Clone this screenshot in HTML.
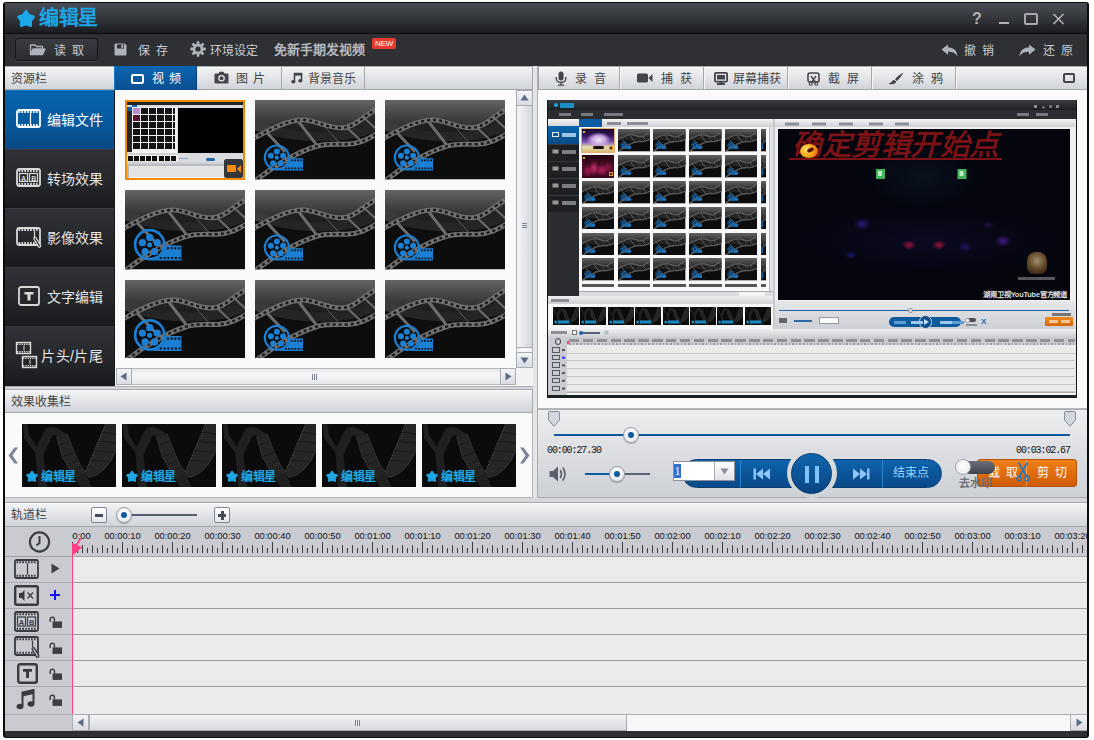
<!DOCTYPE html>
<html lang="zh-CN">
<head>
<meta charset="utf-8">
<title>编辑星</title>
<style>
*{box-sizing:border-box;margin:0;padding:0}
html,body{width:1094px;height:740px;overflow:hidden;background:#fff}
body{font-family:"Liberation Sans",sans-serif;font-size:12px;color:#333;position:relative}
.abs{position:absolute}
#win{position:absolute;left:3px;top:2px;width:1086px;height:735.500px;background:#2d2f33;border-radius:3px;overflow:hidden;border:2px solid #0b0b0c;border-top-width:1px;border-bottom-width:1px}
/* everything inside #app is positioned in page coordinates */
#app{position:absolute;left:0;top:0;width:1094px;height:740px}
#title{left:5px;top:3px;width:1082px;height:30px;background:linear-gradient(#494c54 0,#43464d 15%,#33363b 50%,#222428 85%,#1b1c20 100%)}
#titleline{left:5px;top:33px;width:1082px;height:1px;background:#0a0a0b}
#toolbar{left:5px;top:34px;width:1082px;height:32px;background:#2e3034}
.tbtxt{color:#c9ccd1;font-size:12px;line-height:14px;white-space:nowrap}
.hdr{background:linear-gradient(#f3f4f5 0,#e4e6e9 45%,#d0d3d8 100%);border:1px solid #a4a7ac;box-shadow:inset 0 1px 0 #fafafa}
.hdrtxt{font-size:12px;color:#444;line-height:14px;white-space:nowrap}
.tab{position:absolute;top:0;height:100%;border-right:1px solid #a5a8ad}
.side{left:5px;width:109px;height:59px;background:linear-gradient(#303237 0,#26282c 50%,#191a1d 100%);border-top:1px solid #3a3c41;color:#e6e6e6;font-size:14px}
.side.sel{background:linear-gradient(#0764ad 0,#075a9f 50%,#0b4a86 100%);border-top:1px solid #1674bd;color:#fff}
.side span{position:absolute;left:42px;top:20px;line-height:18px;white-space:nowrap}
.thumb{position:absolute;width:120px;height:80px}
.eff{position:absolute;top:424px;width:94px;height:63px}
.sb{background:linear-gradient(#fbfbfb,#ececec)}
.sbbtn{background:linear-gradient(#f3f4f6,#d9dce1);border:1px solid #a9acb1}
.trk{left:72px;width:1015px;height:1px;background:#9d9d9d}
.trkL{left:5px;width:67px;height:1px;background:#a9abb0}

.mt{background:linear-gradient(#5a5a5a 0,#2c2c2c 38%,#0e0e0e 52%,#0c0c0c 100%)}
.mt:before{content:"";position:absolute;left:3px;top:11px;width:10px;height:8px;background:#1b73bd;border-radius:4px 2px 1px 3px}
.mt:after{content:"";position:absolute;left:8px;top:6px;width:24px;height:3px;background:#5d5d5d;transform:rotate(-14deg);opacity:.8}
.rtab{position:absolute;top:67px;height:22px;border-right:1px solid #a5a8ad;box-shadow:1px 0 0 #f4f5f6}
.digi{font-family:"Liberation Mono",monospace;font-size:10px;line-height:12px;color:#111;letter-spacing:-1.1px;white-space:nowrap}
#t1i i{position:absolute;display:block}
</style>
</head>
<body>

<svg width="0" height="0" style="position:absolute">
<defs>
<linearGradient id="tg" x1="0" y1="0" x2="0" y2="1"><stop offset="0" stop-color="#646464"/><stop offset="0.5" stop-color="#3a3a3a"/><stop offset="1" stop-color="#1c1c1c"/></linearGradient>
<linearGradient id="tg2" x1="0" y1="0" x2="0" y2="1"><stop offset="0" stop-color="#fff" stop-opacity="0"/><stop offset="1" stop-color="#fff" stop-opacity="0.140"/></linearGradient>
<g id="reel">
<circle cx="21.900" cy="57.800" r="12" fill="none" stroke="#1b7fd4" stroke-width="2.200"/>
<g fill="#1b7fd4"><circle cx="21.900" cy="51.800" r="3"/><circle cx="15.900" cy="56.200" r="3"/><circle cx="28.100" cy="56.200" r="3"/><circle cx="18.100" cy="63.600" r="3"/><circle cx="25.800" cy="63.600" r="3"/><circle cx="21.900" cy="58" r="2.100"/>
<path d="M21.900 71 H48 V58.600 H34.900 A13.100 13.100 0 0 1 21.900 70.900 Z"/></g>
<path d="M36 60.800 H47.200" stroke="#0d0d0d" stroke-width="1.700" stroke-dasharray="1.700 1.400"/>
<path d="M30.200 68.900 H47.200" stroke="#0d0d0d" stroke-width="1.700" stroke-dasharray="1.700 1.400"/>
</g>
<g id="filmbg">
<rect width="120" height="80" fill="#0d0d0d"/>
<path d="M0 0 H120 V31 C95 45 35 44 0 30 Z" fill="url(#tg)"/>
<path d="M0 20 C35 36 95 37 120 20 V31 C95 45 35 44 0 30 Z" fill="url(#tg2)"/><path d="M0 30 C35 44 95 45 120 31" stroke="#3c3c3c" stroke-width="1" fill="none"/>
<!-- film body -->
<path d="M-2 40 C15 31 30 21 47 20 C60 19.5 70 28 86 28 C100 28 108 16 122 9 L122 36 C112 41 104 45 92 45 C80 45 72 43 62 47 C40 54 15 70 -2 84 Z" fill="#101010" opacity="0.5"/>
<!-- dividers -->
<path d="M12 33 L30 52 M43 21 L63 47" stroke="#6c6c6c" stroke-width="3"/>
<path d="M69 26 L86 45" stroke="#5a5a5a" stroke-width="1"/>
<path d="M91 27 L107 42 M108 17 L121 29" stroke="#6c6c6c" stroke-width="2"/>
<!-- rails -->
<path id="r1" d="M-2 39 C15 30 30 21 47 20 C60 19.5 70 28 86 28 C100 28 108 16 122 9" stroke="#707070" stroke-width="5" fill="none"/>
<path d="M-2 39 C15 30 30 21 47 20 C60 19.5 70 28 86 28 C100 28 108 16 122 9" stroke="#1b1b1b" stroke-width="2.4" stroke-dasharray="3 3" fill="none"/>
<path d="M-2 83 C15 69 40 53 62 46.500 C72 43 80 45 92 44.500 C104 44 112 40 122 34" stroke="#707070" stroke-width="5" fill="none"/>
<path d="M-2 83 C15 69 40 53 62 46.500 C72 43 80 45 92 44.500 C104 44 112 40 122 34" stroke="#1b1b1b" stroke-width="2.4" stroke-dasharray="3 3" fill="none"/>
</g>
<symbol id="film" viewBox="0 0 120 80"><use href="#filmbg"/><use href="#reel"/></symbol>
<symbol id="film2" viewBox="0 0 120 80"><use href="#filmbg"/><use href="#reel" transform="translate(8.800 71) scale(1.214) translate(-8.800 -71)"/></symbol>
<symbol id="effs" viewBox="0 0 94 63">
<rect width="94" height="63" fill="#0b0b0b"/>
<path d="M1 0 H5.500 L7 11 L14.500 23 L22.500 7 C25 2.500 31 1.500 36 4.500 C40 7 43 9.500 45.300 10 L52.300 28 L59.400 43 L63.500 47.500 L83.500 0 H94 V27 C91 34 89 37 87.500 39 C84 44 80 48 75.500 50.500 C72 52.500 68 53.500 65 53 L70 63 H58 L53 53.500 C51 52 50 50.500 49.300 48.500 L40.300 33 L34.700 13 C33.500 10.500 31 10.500 29.800 13 L21.500 31 L25 63 H16 L13.500 29 L2 14 Z" fill="#202020"/>
<path d="M83.500 0 H94 V27 C91 34 89 37 87.500 39 C84 44 80 48 75.500 50.500 C72 52.500 68 53.500 65 53 L63.500 47.500 Z" fill="#262626"/>
<path d="M34.700 13 L45.300 10 L52.300 28 L59.400 43 L63.500 47.500 L58 52 L49.300 48.500 L40.300 33 Z" fill="#252525"/>
<path d="M37 21 L48 17.500 M40.300 33 L52.300 28 M45 41 L56 36 M49.300 48.500 L59.400 43 M80.500 8 L94 10 M76.500 17 L94 19 M72.500 26.500 L93 28 M68.500 36 L88 38" stroke="#171717" stroke-width="0.900" fill="none"/>
<path d="M34.700 13 L40.300 33 L49.300 48.500 L56 52.500" stroke="#555" stroke-width="0.800" stroke-dasharray="1.200 1.200" fill="none"/>
<path d="M45.300 10 L52.300 28 L59.400 43 L63.500 47.500" stroke="#4a4a4a" stroke-width="0.800" stroke-dasharray="1.200 1.200" fill="none"/>
<path d="M83.500 0 L63.500 47.500" stroke="#5a5a5a" stroke-width="0.800" stroke-dasharray="1.200 1.200" fill="none"/>
<path d="M93.500 27 C90 35 84 45 75.500 50.500 C72 52.500 68 53.500 65 53" stroke="#484848" stroke-width="0.800" stroke-dasharray="1.200 1.200" fill="none"/>
<path d="M10.0 47.6 L11.8 50.4 L14.9 51.2 L12.9 53.7 L13.1 57.0 L10.0 55.8 L6.900 57.0 L7.100 53.700 L5.100 51.200 L8.200 50.400 Z" fill="#1fa6e3" stroke="#1fa6e3" stroke-width="1.800" stroke-linejoin="round"/>
</symbol>
</defs>
</svg>
<div id="win"></div>
<div id="app">
<!-- TITLE BAR -->
<div id="title" class="abs"></div>
<div id="titleline" class="abs"></div>
<div id="toolbar" class="abs"></div>

<svg class="abs" style="left:16px;top:9px" width="20" height="20" viewBox="0 0 20 20"><path d="M10.0 2.2 L12.9 6.2 L17.6 7.7 L14.7 11.7 L14.7 16.7 L10.0 15.1 L5.3 16.7 L5.3 11.7 L2.4 7.7 L7.1 6.2 Z" fill="#1ca7e6" stroke="#1ca7e6" stroke-width="2.600" stroke-linejoin="round"/></svg>
<div class="abs" style="left:39px;top:6px;font-size:20px;line-height:24px;font-weight:bold;color:#1ca7e6;white-space:nowrap;letter-spacing:-0.5px">编辑星</div>
<div class="abs" style="left:971px;top:10px;width:12px;font-size:16px;line-height:18px;color:#b4b4b4;text-align:center;font-weight:bold">?</div>
<div class="abs" style="left:999px;top:22px;width:10px;height:2px;background:#b4b4b4"></div>
<div class="abs" style="left:1024px;top:13px;width:14px;height:12px;border:2px solid #a9a9a9;border-radius:2px"></div>
<svg class="abs" style="left:1052px;top:13px" width="13" height="12" viewBox="0 0 13 12"><path d="M1.5 1 L11.5 11 M11.5 1 L1.5 11" stroke="#b4b4b4" stroke-width="1.6" fill="none"/></svg>


<div class="abs" style="left:15px;top:38px;width:83px;height:23px;border:1px solid #141517;border-radius:3px;background:linear-gradient(#3a3c41,#2a2c30);box-shadow:0 1px 0 #45474c"></div>
<svg class="abs" style="left:29px;top:43px" width="17" height="13" viewBox="0 0 17 13"><path d="M1.500 11.500 V2 H6 L7.500 3.500 H13.500 V5.500" fill="none" stroke="#aeb2ba" stroke-width="1.400" stroke-linejoin="round"/><path d="M1.500 11.500 L4 6 H16 L13.500 11.500 Z" fill="#aeb2ba" stroke="#aeb2ba" stroke-width="1.400" stroke-linejoin="round"/></svg>
<div class="abs tbtxt" style="left:54px;top:44px;letter-spacing:6px">读取</div>
<svg class="abs" style="left:114px;top:43px" width="13" height="13" viewBox="0 0 13 13"><path d="M0.5 1.5 Q0.5 0.5 1.5 0.5 H10.5 L12.5 2.5 V11.5 Q12.5 12.5 11.5 12.5 H1.5 Q0.5 12.5 0.5 11.5 Z" fill="#aeb2ba"/><rect x="3" y="1.5" width="7" height="4" fill="#2e3034"/><rect x="7.3" y="2" width="1.8" height="3" fill="#aeb2ba"/></svg>
<div class="abs tbtxt" style="left:138px;top:44px;letter-spacing:6px">保存</div>
<svg class="abs" style="left:190px;top:41px" width="16" height="16" viewBox="0 0 16 16"><g fill="#aeb2ba"><circle cx="8" cy="8" r="5.2"/><g id="gt"><rect x="6.6" y="0.3" width="2.8" height="15.4" rx="0.6"/></g><use href="#gt" transform="rotate(45 8 8)"/><use href="#gt" transform="rotate(90 8 8)"/><use href="#gt" transform="rotate(135 8 8)"/></g><circle cx="8" cy="8" r="2.6" fill="#2e3034"/></svg>
<div class="abs tbtxt" style="left:210px;top:44px">环境设定</div>
<div class="abs tbtxt" style="left:274px;top:43px;font-size:13px;font-weight:bold;color:#b6b9be">免新手期发视频</div>
<div class="abs" style="left:372px;top:38px;width:24px;height:11px;background:#e8392e;border-radius:2px;color:#fff;font-size:8px;line-height:11px;text-align:center;letter-spacing:-0.2px">NEW</div>
<svg class="abs" style="left:941px;top:44px" width="17" height="13" viewBox="0 0 17 13"><path d="M0.5 5.5 L7 0.5 V3.5 C12 3.5 16 6 16.5 12.5 C14.5 9 11.5 7.8 7 7.8 V10.8 Z" fill="#aeb2ba"/></svg>
<div class="abs tbtxt" style="left:964px;top:44px;letter-spacing:6px">撤销</div>
<svg class="abs" style="left:1019px;top:44px" width="17" height="13" viewBox="0 0 17 13"><path d="M16.5 5.5 L10 0.5 V3.5 C5 3.5 1 6 0.5 12.5 C2.5 9 5.5 7.8 10 7.8 V10.8 Z" fill="#aeb2ba"/></svg>
<div class="abs tbtxt" style="left:1043px;top:44px;letter-spacing:6px">还原</div>


<!-- resource header -->
<div class="abs hdr" style="left:5px;top:66px;width:109px;height:24px;border-left:none;border-right:none"></div>
<div class="abs hdrtxt" style="left:11px;top:72px">资源栏</div>
<div class="abs hdr" style="left:114px;top:66px;width:419px;height:24px"></div>
<div class="abs" style="left:114px;top:66px;width:83px;height:24px;background:linear-gradient(#0a66b0,#0a4f92);border-right:1px solid #083e74;border-left:1px solid #1a7ac4"></div>
<div class="abs" style="left:197px;top:67px;width:85px;height:22px;border-right:1px solid #a5a8ad"></div>
<div class="abs" style="left:282px;top:67px;width:83px;height:22px;border-right:1px solid #a5a8ad"></div>
<div class="abs" style="left:131px;top:74px;width:13px;height:10px;border:2px solid #fff;border-radius:2px"></div>
<div class="abs hdrtxt" style="left:152px;top:72px;color:#fff;letter-spacing:5px">视频</div>
<svg class="abs" style="left:214px;top:71px" width="15" height="13" viewBox="0 0 15 13"><path d="M1.500 2.500 H4.500 L5.500 0.800 H9.500 L10.500 2.500 H13.500 Q14.500 2.500 14.500 3.500 V11.500 Q14.500 12.500 13.500 12.500 H1.500 Q0.500 12.500 0.500 11.500 V3.500 Q0.500 2.500 1.500 2.500 Z" fill="#44464b"/><circle cx="7.500" cy="7.300" r="3.300" fill="#e4e6e9"/><circle cx="7.500" cy="7.300" r="2" fill="#44464b"/></svg>
<div class="abs hdrtxt" style="left:236px;top:72px;letter-spacing:5px">图片</div>
<svg class="abs" style="left:291px;top:72px" width="12" height="12" viewBox="0 0 12 12"><path d="M3.500 9.500 V1.500 H10.500 V8.500" stroke="#44464b" stroke-width="1.600" fill="none"/><rect x="3.500" y="1" width="7" height="2.600" fill="#44464b"/><ellipse cx="2.300" cy="9.800" rx="2.100" ry="1.700" fill="#44464b"/><ellipse cx="9.300" cy="8.800" rx="2.100" ry="1.700" fill="#44464b"/></svg>
<div class="abs hdrtxt" style="left:308px;top:72px">背景音乐</div>
<!-- sidebar -->
<div class="abs" style="left:5px;top:90px;width:109px;height:296px;background:#17181b"></div>
<div class="abs side sel" style="top:90px"><span style="left:42px">编辑文件</span></div>
<div class="abs side" style="top:149px"><span>转场效果</span></div>
<div class="abs side" style="top:208px"><span>影像效果</span></div>
<div class="abs side" style="top:267px"><span>文字编辑</span></div>
<div class="abs side" style="top:326px;height:60px"><span style="left:36px;letter-spacing:0.5px">片头/片尾</span></div>
<!-- sidebar icons -->
<svg class="abs" style="left:16px;top:109px" width="25" height="19" viewBox="0 0 25 19"><rect x="1" y="1" width="23" height="17" rx="2" fill="none" stroke="#fff" stroke-width="1.800"/><path d="M2.500 3 H22.500 M2.500 16 H22.500" stroke="#fff" stroke-width="2" stroke-dasharray="1.700 1.200"/><path d="M14.500 4 V15" stroke="#fff" stroke-width="1.200"/></svg>
<svg class="abs" style="left:16px;top:168px" width="25" height="19" viewBox="0 0 25 19"><rect x="1" y="1" width="23" height="17" rx="2" fill="none" stroke="#d9d9d9" stroke-width="1.800"/><path d="M2.500 3 H22.500 M2.500 16 H22.500" stroke="#d9d9d9" stroke-width="2" stroke-dasharray="1.700 1.200"/><rect x="3.500" y="5.500" width="8" height="8" fill="none" stroke="#d9d9d9" stroke-width="1.200"/><rect x="13.500" y="5.500" width="8" height="8" fill="none" stroke="#d9d9d9" stroke-width="1.200"/><text x="5" y="12.500" font-size="7" font-weight="bold" fill="#d9d9d9" font-family="Liberation Sans, sans-serif">A</text><text x="15.200" y="12.500" font-size="7" font-weight="bold" fill="#d9d9d9" font-family="Liberation Sans, sans-serif">B</text></svg>
<svg class="abs" style="left:16px;top:227px" width="27" height="22" viewBox="0 0 27 22"><rect x="1" y="1" width="23" height="17" rx="2" fill="none" stroke="#d9d9d9" stroke-width="1.800"/><path d="M2.500 3 H22.500 M2.500 16 H22.500" stroke="#d9d9d9" stroke-width="2" stroke-dasharray="1.700 1.200"/><path d="M18.500 4 V10" stroke="#d9d9d9" stroke-width="1.200"/><path d="M19 11.500 L23.500 19" stroke="#d9d9d9" stroke-width="3.600" stroke-linecap="round"/><path d="M19 11.500 L23.500 19" stroke="#26282c" stroke-width="1.200" stroke-linecap="round"/></svg>
<svg class="abs" style="left:18px;top:286px" width="22" height="20" viewBox="0 0 22 20"><rect x="1" y="1" width="20" height="18" rx="2" fill="none" stroke="#d9d9d9" stroke-width="1.800"/><path d="M6.500 6 H15.500 V8.500 H12.500 V14.500 H9.500 V8.500 H6.500 Z" fill="#d9d9d9"/></svg>
<svg class="abs" style="left:15px;top:341px" width="24" height="28" viewBox="0 0 24 28"><g fill="none" stroke="#d9d9d9"><rect x="1.500" y="1.500" width="14" height="11" stroke-width="1.400"/><path d="M2 3.200 H15 M2 10.800 H15" stroke-width="1.600" stroke-dasharray="1.300 1"/><path d="M9 4.500 V9.500" stroke-width="1"/><rect x="7.500" y="15.500" width="14" height="11" stroke-width="1.400"/><path d="M8 17.200 H21 M8 24.800 H21" stroke-width="1.600" stroke-dasharray="1.300 1"/><path d="M15 18.500 V23.500" stroke-width="1"/></g></svg>
<!-- thumbs area -->
<div class="abs" style="left:114px;top:90px;width:419px;height:296px;background:#fafafa;border-left:1px solid #15161a"></div>
<div class="abs" id="t1" style="left:125px;top:100px;width:120px;height:80px;background:#f58a07">
<div class="abs" style="left:2px;top:2px;width:116px;height:76px;background:#dedfe1;overflow:hidden">
<div class="abs" style="left:-2px;top:-2px;width:120px;height:80px" id="t1i">
<i style="left:2px;top:2px;width:116px;height:3.400px;background:#232428"></i>
<i style="left:2px;top:5.400px;width:116px;height:1.800px;background:#d8dadd"></i>
<i style="left:7px;top:5.400px;width:5px;height:1.800px;background:#1565b0"></i>
<i style="left:6.700px;top:7px;width:45.500px;height:46px;background:#f4f4f4"></i>
<i style="left:2px;top:7px;width:4.700px;height:44.500px;background:#25262a"></i>
<i style="left:2px;top:7px;width:4.700px;height:4.300px;background:#0b5fa8"></i>
<i style="left:7.9px;top:7.9px;width:7px;height:6.100px;background:#b98fd0"></i><i style="left:15.9px;top:7.9px;width:7px;height:6.100px;background:#141414"></i><i style="left:23.9px;top:7.9px;width:7px;height:6.100px;background:#141414"></i><i style="left:31.9px;top:7.9px;width:7px;height:6.100px;background:#141414"></i><i style="left:39.9px;top:7.9px;width:7px;height:6.100px;background:#141414"></i><i style="left:47.9px;top:7.9px;width:2.6px;height:6.100px;background:#141414"></i><i style="left:7.9px;top:14.9px;width:7px;height:6.100px;background:#5a1030"></i><i style="left:15.9px;top:14.9px;width:7px;height:6.100px;background:#141414"></i><i style="left:23.9px;top:14.9px;width:7px;height:6.100px;background:#141414"></i><i style="left:31.9px;top:14.9px;width:7px;height:6.100px;background:#141414"></i><i style="left:39.9px;top:14.9px;width:7px;height:6.100px;background:#141414"></i><i style="left:47.9px;top:14.9px;width:2.6px;height:6.100px;background:#141414"></i><i style="left:7.9px;top:22.0px;width:7px;height:6.100px;background:#141414"></i><i style="left:15.9px;top:22.0px;width:7px;height:6.100px;background:#141414"></i><i style="left:23.9px;top:22.0px;width:7px;height:6.100px;background:#141414"></i><i style="left:31.9px;top:22.0px;width:7px;height:6.100px;background:#141414"></i><i style="left:39.9px;top:22.0px;width:7px;height:6.100px;background:#141414"></i><i style="left:47.9px;top:22.0px;width:2.6px;height:6.100px;background:#141414"></i><i style="left:7.9px;top:29.0px;width:7px;height:6.100px;background:#141414"></i><i style="left:15.9px;top:29.0px;width:7px;height:6.100px;background:#141414"></i><i style="left:23.9px;top:29.0px;width:7px;height:6.100px;background:#141414"></i><i style="left:31.9px;top:29.0px;width:7px;height:6.100px;background:#141414"></i><i style="left:39.9px;top:29.0px;width:7px;height:6.100px;background:#141414"></i><i style="left:47.9px;top:29.0px;width:2.6px;height:6.100px;background:#141414"></i><i style="left:7.9px;top:36.1px;width:7px;height:6.100px;background:#141414"></i><i style="left:15.9px;top:36.1px;width:7px;height:6.100px;background:#141414"></i><i style="left:23.9px;top:36.1px;width:7px;height:6.100px;background:#141414"></i><i style="left:31.9px;top:36.1px;width:7px;height:6.100px;background:#141414"></i><i style="left:39.9px;top:36.1px;width:7px;height:6.100px;background:#141414"></i><i style="left:47.9px;top:36.1px;width:2.6px;height:6.100px;background:#141414"></i><i style="left:7.9px;top:43.1px;width:7px;height:6.100px;background:#141414"></i><i style="left:15.9px;top:43.1px;width:7px;height:6.100px;background:#141414"></i><i style="left:23.9px;top:43.1px;width:7px;height:6.100px;background:#141414"></i><i style="left:31.9px;top:43.1px;width:7px;height:6.100px;background:#141414"></i><i style="left:39.9px;top:43.1px;width:7px;height:6.100px;background:#141414"></i><i style="left:47.9px;top:43.1px;width:2.6px;height:6.100px;background:#141414"></i>
<i style="left:52.700px;top:7.700px;width:65.300px;height:45.300px;background:#000"></i>
<i style="left:52.500px;top:53px;width:65.500px;height:8.500px;background:#d9dbde"></i>
<i style="left:2px;top:53px;width:50.500px;height:2.200px;background:#d0d2d6"></i>
<i style="left:2px;top:55.200px;width:50.500px;height:6px;background:#f0f0f0"></i>
<i style="left:2.5px;top:56px;width:5px;height:4.500px;background:#0e0e0e"></i><i style="left:8.7px;top:56px;width:5px;height:4.500px;background:#0e0e0e"></i><i style="left:14.9px;top:56px;width:5px;height:4.500px;background:#0e0e0e"></i><i style="left:21.1px;top:56px;width:5px;height:4.500px;background:#0e0e0e"></i><i style="left:27.3px;top:56px;width:5px;height:4.500px;background:#0e0e0e"></i><i style="left:33.5px;top:56px;width:5px;height:4.500px;background:#0e0e0e"></i><i style="left:39.7px;top:56px;width:5px;height:4.500px;background:#0e0e0e"></i><i style="left:45.9px;top:56px;width:5px;height:4.500px;background:#0e0e0e"></i>
<i style="left:81px;top:57.500px;width:9px;height:3px;background:#1b66a8;border-radius:1.500px"></i>
<i style="left:54px;top:58.300px;width:9px;height:1.200px;background:#8fa3bd"></i>
<i style="left:2px;top:61.500px;width:116px;height:2px;background:#cfd1d5"></i>
<i style="left:2px;top:63.500px;width:116px;height:2.300px;background:#b9bbc1"></i>
<i style="left:2px;top:65.800px;width:2.300px;height:12.200px;background:#b9bbc1"></i>
<i style="left:4.300px;top:65.800px;width:113.700px;height:11px;background:#e4e4e4"></i>
<i style="left:4.300px;top:76.800px;width:113.700px;height:1.200px;background:#f2f2f2"></i>
<i style="left:99px;top:59px;width:19px;height:18.700px;background:#33353a;border-radius:2.500px"></i>
<i style="left:102px;top:65.300px;width:9px;height:7px;background:#f58a07;border-radius:0.800px"></i>
<i style="left:111.500px;top:64.800px;width:0;height:0;border-right:4.500px solid #f58a07;border-top:4px solid transparent;border-bottom:4px solid transparent"></i>
</div></div></div>

<svg class="thumb" style="left:255px;top:100px;height:79.500px" viewBox="0 0 120 80" preserveAspectRatio="none"><use href="#film"/></svg>
<svg class="thumb" style="left:385px;top:100px;height:79.500px" viewBox="0 0 120 80" preserveAspectRatio="none"><use href="#film"/></svg>
<svg class="thumb" style="left:125px;top:190px;height:79.500px" viewBox="0 0 120 80" preserveAspectRatio="none"><use href="#film2"/></svg>
<svg class="thumb" style="left:255px;top:190px;height:79.500px" viewBox="0 0 120 80" preserveAspectRatio="none"><use href="#film"/></svg>
<svg class="thumb" style="left:385px;top:190px;height:79.500px" viewBox="0 0 120 80" preserveAspectRatio="none"><use href="#film"/></svg>
<svg class="thumb" style="left:125px;top:280px;height:78px" viewBox="0 0 120 78" preserveAspectRatio="xMidYMin slice"><use href="#film2" width="120" height="80"/></svg>
<svg class="thumb" style="left:255px;top:280px;height:78px" viewBox="0 0 120 78" preserveAspectRatio="xMidYMin slice"><use href="#film" width="120" height="80"/></svg>
<svg class="thumb" style="left:385px;top:280px;height:78px" viewBox="0 0 120 78" preserveAspectRatio="xMidYMin slice"><use href="#film" width="120" height="80"/></svg>

<!-- v scrollbar -->
<div class="abs sb" style="left:516px;top:90px;width:17px;height:278px;background:linear-gradient(90deg,#e9eaec,#fbfbfb 40%,#eeeff1);border-left:1px solid #b5b7bb;border-right:1px solid #b5b7bb"></div>
<div class="abs" style="left:516px;top:105px;width:17px;height:243px;background:linear-gradient(90deg,#f5f6f7,#e4e6ea 50%,#d3d6dc);border:1px solid #a9acb1"></div><div class="abs sbbtn" style="left:516px;top:90px;width:17px;height:16px"></div>
<div class="abs sbbtn" style="left:516px;top:352px;width:17px;height:16px"></div>
<svg class="abs" style="left:520px;top:94px" width="9" height="7" viewBox="0 0 9 7"><path d="M4.500 0.500 L8.500 6.500 H0.500 Z" fill="#5d6a86"/></svg>
<svg class="abs" style="left:520px;top:357px" width="9" height="7" viewBox="0 0 9 7"><path d="M4.500 6.500 L8.500 0.500 H0.500 Z" fill="#5d6a86"/></svg>
<div class="abs" style="left:522px;top:223px;width:5px;height:1px;background:#7d8597;box-shadow:0 2px 0 #7d8597,0 4px 0 #7d8597"></div>
<!-- h scrollbar -->
<div class="abs" style="left:116px;top:368px;width:417px;height:17px;background:linear-gradient(#e6e7ea,#f7f7f8 40%,#e4e5e8);border-top:1px solid #b5b7bb;border-bottom:1px solid #b5b7bb"></div>
<div class="abs sbbtn" style="left:116px;top:368px;width:16px;height:17px"></div>
<div class="abs sbbtn" style="left:500px;top:368px;width:16px;height:17px"></div>
<div class="abs" style="left:516px;top:368px;width:17px;height:17px;background:#f2f2f2"></div>
<svg class="abs" style="left:120px;top:372px" width="7" height="9" viewBox="0 0 7 9"><path d="M0.500 4.500 L6.500 0.500 V8.500 Z" fill="#5d6a86"/></svg>
<svg class="abs" style="left:505px;top:372px" width="7" height="9" viewBox="0 0 7 9"><path d="M6.500 4.500 L0.500 0.500 V8.500 Z" fill="#5d6a86"/></svg>
<div class="abs" style="left:312px;top:374px;width:1px;height:6px;background:#7d8597;box-shadow:2px 0 0 #7d8597,4px 0 0 #7d8597"></div>
<!-- splitter -->
<div class="abs" style="left:533px;top:66px;width:5px;height:432px;background:#e4e5e7;border-right:1px solid #a9acb1"></div>


<!-- right header -->
<div class="abs hdr" style="left:538px;top:66px;width:549px;height:24px;border-right:none"></div>
<div class="rtab" style="left:538px;width:82px"></div>
<div class="rtab" style="left:620px;width:84px"></div>
<div class="rtab" style="left:704px;width:84px"></div>
<div class="rtab" style="left:788px;width:84px"></div>
<div class="rtab" style="left:872px;width:84px"></div>
<svg class="abs" style="left:555px;top:71px" width="12" height="15" viewBox="0 0 12 15"><rect x="3.500" y="0.500" width="5" height="9" rx="2.500" fill="#44464b"/><path d="M1.200 6 V7 Q1.200 11.500 6 11.500 Q10.800 11.500 10.800 7 V6 M6 11.500 V14 M3 14.200 H9" stroke="#44464b" stroke-width="1.300" fill="none"/></svg>
<div class="abs hdrtxt" style="left:575px;top:72px;letter-spacing:7px">录音</div>
<svg class="abs" style="left:637px;top:73px" width="16" height="10" viewBox="0 0 16 10"><rect x="0" y="0.500" width="11" height="9" rx="1.500" fill="#44464b"/><path d="M11.500 5 L15.500 1 V9 Z" fill="#44464b"/></svg>
<div class="abs hdrtxt" style="left:661px;top:72px;letter-spacing:7px">捕获</div>
<svg class="abs" style="left:714px;top:72px" width="14" height="13" viewBox="0 0 14 13"><rect x="0.900" y="0.900" width="12.200" height="8.700" rx="1" fill="#e4e6e9" stroke="#44464b" stroke-width="1.800"/><rect x="3" y="3" width="8" height="4.500" fill="#44464b"/><rect x="3" y="11" width="8" height="2" fill="#44464b"/><rect x="5.500" y="9.500" width="3" height="2" fill="#44464b"/></svg>
<div class="abs hdrtxt" style="left:733px;top:72px">屏幕捕获</div>
<svg class="abs" style="left:807px;top:72px" width="13" height="14" viewBox="0 0 13 14"><rect x="1" y="1" width="11" height="9" rx="2" fill="none" stroke="#44464b" stroke-width="1.600"/><path d="M4 4 L9 11 M9 4 L4 11" stroke="#44464b" stroke-width="1.300"/><circle cx="3.700" cy="11.800" r="1.500" fill="none" stroke="#44464b" stroke-width="1.100"/><circle cx="9.300" cy="11.800" r="1.500" fill="none" stroke="#44464b" stroke-width="1.100"/></svg>
<div class="abs hdrtxt" style="left:828px;top:72px;letter-spacing:7px">截屏</div>
<svg class="abs" style="left:888px;top:72px" width="16" height="13" viewBox="0 0 16 13"><path d="M15.500 0.500 C12 2 8.500 5 7 7.500 L8.800 9 C11 7 14 3.500 15.500 0.500 Z" fill="#44464b"/><path d="M6.300 8 C4 8 4.200 10.500 0.500 11.800 C4 13 8 12 8.200 9.600 Z" fill="#44464b"/></svg>
<div class="abs hdrtxt" style="left:912px;top:72px;letter-spacing:7px">涂鸦</div>
<div class="abs" style="left:1063px;top:73px;width:12px;height:10px;border:2px solid #44464b;border-radius:2px"></div>
<!-- preview white area -->
<div class="abs" style="left:538px;top:90px;width:549px;height:319px;background:#fafafa;border-bottom:1px solid #b5b7bb"></div>
<!-- PREVIEW (nested screenshot) -->
<div class="abs" id="pv" style="left:547px;top:100px;width:530px;height:298px;background:#1b1c1f;overflow:hidden">
 <div class="abs" style="left:0;top:0;width:530px;height:10px;background:linear-gradient(#3b3d43,#1d1e22)"></div>
 <div class="abs" style="left:0;top:10px;width:530px;height:9px;background:#2b2d31"></div>
 <div class="abs" style="left:7px;top:3px;width:4px;height:4px;background:#1ca7e6;border-radius:2px"></div>
 <div class="abs" style="left:487px;top:4.500px;width:3px;height:3px;background:#8a8d93;box-shadow:8px 1px 0 -0.500px #8a8d93,15px 0 0 #6f7278,22px 0 0 #8a8d93"></div>
 <div class="abs" style="left:13px;top:2.500px;width:14px;height:5px;background:#1a8ec4"></div>
 <div class="abs" style="left:12px;top:13px;width:12px;height:3px;background:#777a80;box-shadow:22px 0 0 #777a80,45px 0 0 #777a80,52px 0 0 #777a80"></div>
 <div class="abs" style="left:470px;top:13px;width:12px;height:3px;background:#777a80;box-shadow:19px 0 0 #777a80"></div>
 <!-- body bg -->
 <div class="abs" style="left:1px;top:19px;width:527.500px;height:277px;background:#e9eaec"></div>
 <!-- header row -->
 <div class="abs" style="left:1px;top:19px;width:225px;height:7.500px;background:linear-gradient(#f4f4f5,#cfd1d5)"></div>
 <div class="abs" style="left:32px;top:19px;width:22.500px;height:7.500px;background:#0a5ba2"></div>
 <div class="abs" style="left:228px;top:19px;width:300px;height:8px;background:linear-gradient(#f4f4f5,#cfd1d5)"></div>
 <div class="abs" style="left:60px;top:21.500px;width:14px;height:3px;background:#8c8f95;box-shadow:20px 0 0 #8c8f95,27px 0 0 #8c8f95,178px 0.500px 0 #8c8f95,205px 0.500px 0 #8c8f95,232px 0.500px 0 #8c8f95,262px 0.500px 0 #8c8f95,288px 0.500px 0 #8c8f95"></div>
 <!-- sidebar -->
 <div class="abs" style="left:1px;top:26px;width:30.500px;height:170px;background:#1f2023"></div>
 <div class="abs" style="left:1px;top:26px;width:30.500px;height:17.500px;background:linear-gradient(#0764ad,#0b4a86)"></div>
 <div class="abs" style="left:1px;top:60.500px;width:30.500px;height:1px;background:#38393d;box-shadow:0 -17px 0 #38393d,0 17px 0 #38393d,0 34px 0 #38393d,0 51px 0 #111"></div>
 <div class="abs" style="left:1px;top:111.500px;width:30.500px;height:85px;background:#2b2c30"></div>
 <div class="abs" style="left:5px;top:32px;width:7px;height:5px;border:1px solid #e8e8e8;box-shadow:0 17px 0 -0.500px #999,0 34px 0 -0.500px #999,0 51px 0 -0.500px #999,0 68px 0 -0.500px #999"></div>
 <div class="abs" style="left:14.500px;top:33px;width:14px;height:3.500px;background:#9ec4e4;box-shadow:0 17px 0 #7b7d82,0 34px 0 #7b7d82,0 51px 0 #7b7d82,0 68px 0 #7b7d82"></div>
 <!-- thumbs panel -->
 <div class="abs" style="left:31.500px;top:26.500px;width:194.500px;height:170px;background:#f8f8f8"></div>
 <div class="abs" style="left:34.9px;top:29.4px;width:32.6px;height:22.6px;background:radial-gradient(ellipse 38% 34% at 52% 48%,#f2eaf6 0,#c7a4e0 55%,rgba(150,100,200,0) 100%),linear-gradient(#1b0a30 0,#34155c 30%,#7a4fae 55%,#e9dcae 78%,#d8b878 100%);outline:1px solid #e8b070"><i class="abs" style="left:11px;top:17px;width:11px;height:3px;border-radius:1.500px;background:#15100c"></i><i class="abs" style="left:27px;top:16.500px;width:4.500px;height:4.500px;background:#3a2a10;border:1px solid #e8952a"></i><i class="abs" style="left:1px;top:1.500px;width:2px;height:2px;background:#e8b030"></i></div>
<svg class="abs" style="left:70.6px;top:29.4px;width:32.6px;height:22.6px" viewBox="0 0 120 80" preserveAspectRatio="none"><use href="#film"/></svg>
<svg class="abs" style="left:106.4px;top:29.4px;width:32.6px;height:22.6px" viewBox="0 0 120 80" preserveAspectRatio="none"><use href="#film"/></svg>
<svg class="abs" style="left:142.1px;top:29.4px;width:32.6px;height:22.6px" viewBox="0 0 120 80" preserveAspectRatio="none"><use href="#film"/></svg>
<svg class="abs" style="left:177.9px;top:29.4px;width:32.6px;height:22.6px" viewBox="0 0 120 80" preserveAspectRatio="none"><use href="#film"/></svg>
<svg class="abs" style="left:213.6px;top:29.4px;width:5.5px;height:22.6px" viewBox="0 0 120 80" preserveAspectRatio="none"><use href="#film"/></svg>
<div class="abs" style="left:34.9px;top:55.2px;width:32.6px;height:22.6px;background:radial-gradient(ellipse 5px 7px at 12px 13px,#d02a6e,transparent),radial-gradient(ellipse 6px 6px at 20px 15px,#b8205c,transparent),radial-gradient(ellipse 5px 6px at 6px 16px,#a41a50,transparent),radial-gradient(ellipse 5px 5px at 26px 12px,#8a1848,transparent),linear-gradient(#240510,#5a0e2c 70%,#3a081c)"><i class="abs" style="left:27px;top:16.500px;width:4.500px;height:4.500px;background:#3a2a10;border:1px solid #e8952a"></i><i class="abs" style="left:1px;top:1.500px;width:2px;height:2px;background:#e8b030"></i></div>
<svg class="abs" style="left:70.6px;top:55.2px;width:32.6px;height:22.6px" viewBox="0 0 120 80" preserveAspectRatio="none"><use href="#film"/></svg>
<svg class="abs" style="left:106.4px;top:55.2px;width:32.6px;height:22.6px" viewBox="0 0 120 80" preserveAspectRatio="none"><use href="#film"/></svg>
<svg class="abs" style="left:142.1px;top:55.2px;width:32.6px;height:22.6px" viewBox="0 0 120 80" preserveAspectRatio="none"><use href="#film"/></svg>
<svg class="abs" style="left:177.9px;top:55.2px;width:32.6px;height:22.6px" viewBox="0 0 120 80" preserveAspectRatio="none"><use href="#film"/></svg>
<svg class="abs" style="left:213.6px;top:55.2px;width:5.5px;height:22.6px" viewBox="0 0 120 80" preserveAspectRatio="none"><use href="#film"/></svg>
<svg class="abs" style="left:34.9px;top:81.0px;width:32.6px;height:22.6px" viewBox="0 0 120 80" preserveAspectRatio="none"><use href="#film"/></svg>
<svg class="abs" style="left:70.6px;top:81.0px;width:32.6px;height:22.6px" viewBox="0 0 120 80" preserveAspectRatio="none"><use href="#film"/></svg>
<svg class="abs" style="left:106.4px;top:81.0px;width:32.6px;height:22.6px" viewBox="0 0 120 80" preserveAspectRatio="none"><use href="#film"/></svg>
<svg class="abs" style="left:142.1px;top:81.0px;width:32.6px;height:22.6px" viewBox="0 0 120 80" preserveAspectRatio="none"><use href="#film"/></svg>
<svg class="abs" style="left:177.9px;top:81.0px;width:32.6px;height:22.6px" viewBox="0 0 120 80" preserveAspectRatio="none"><use href="#film"/></svg>
<svg class="abs" style="left:213.6px;top:81.0px;width:5.5px;height:22.6px" viewBox="0 0 120 80" preserveAspectRatio="none"><use href="#film"/></svg>
<svg class="abs" style="left:34.9px;top:106.8px;width:32.6px;height:22.6px" viewBox="0 0 120 80" preserveAspectRatio="none"><use href="#film"/></svg>
<svg class="abs" style="left:70.6px;top:106.8px;width:32.6px;height:22.6px" viewBox="0 0 120 80" preserveAspectRatio="none"><use href="#film"/></svg>
<svg class="abs" style="left:106.4px;top:106.8px;width:32.6px;height:22.6px" viewBox="0 0 120 80" preserveAspectRatio="none"><use href="#film"/></svg>
<svg class="abs" style="left:142.1px;top:106.8px;width:32.6px;height:22.6px" viewBox="0 0 120 80" preserveAspectRatio="none"><use href="#film"/></svg>
<svg class="abs" style="left:177.9px;top:106.8px;width:32.6px;height:22.6px" viewBox="0 0 120 80" preserveAspectRatio="none"><use href="#film"/></svg>
<svg class="abs" style="left:213.6px;top:106.8px;width:5.5px;height:22.6px" viewBox="0 0 120 80" preserveAspectRatio="none"><use href="#film"/></svg>
<svg class="abs" style="left:34.9px;top:132.6px;width:32.6px;height:22.6px" viewBox="0 0 120 80" preserveAspectRatio="none"><use href="#film"/></svg>
<svg class="abs" style="left:70.6px;top:132.6px;width:32.6px;height:22.6px" viewBox="0 0 120 80" preserveAspectRatio="none"><use href="#film"/></svg>
<svg class="abs" style="left:106.4px;top:132.6px;width:32.6px;height:22.6px" viewBox="0 0 120 80" preserveAspectRatio="none"><use href="#film"/></svg>
<svg class="abs" style="left:142.1px;top:132.6px;width:32.6px;height:22.6px" viewBox="0 0 120 80" preserveAspectRatio="none"><use href="#film"/></svg>
<svg class="abs" style="left:177.9px;top:132.6px;width:32.6px;height:22.6px" viewBox="0 0 120 80" preserveAspectRatio="none"><use href="#film"/></svg>
<svg class="abs" style="left:213.6px;top:132.6px;width:5.5px;height:22.6px" viewBox="0 0 120 80" preserveAspectRatio="none"><use href="#film"/></svg>
<svg class="abs" style="left:34.9px;top:158.4px;width:32.6px;height:22.6px" viewBox="0 0 120 80" preserveAspectRatio="none"><use href="#film"/></svg>
<svg class="abs" style="left:70.6px;top:158.4px;width:32.6px;height:22.6px" viewBox="0 0 120 80" preserveAspectRatio="none"><use href="#film"/></svg>
<svg class="abs" style="left:106.4px;top:158.4px;width:32.6px;height:22.6px" viewBox="0 0 120 80" preserveAspectRatio="none"><use href="#film"/></svg>
<svg class="abs" style="left:142.1px;top:158.4px;width:32.6px;height:22.6px" viewBox="0 0 120 80" preserveAspectRatio="none"><use href="#film"/></svg>
<svg class="abs" style="left:177.9px;top:158.4px;width:32.6px;height:22.6px" viewBox="0 0 120 80" preserveAspectRatio="none"><use href="#film"/></svg>
<svg class="abs" style="left:213.6px;top:158.4px;width:5.5px;height:22.6px" viewBox="0 0 120 80" preserveAspectRatio="none"><use href="#film"/></svg>
<div class="abs" style="left:34.9px;top:184.2px;width:32.6px;height:3px;background:#555"></div>
<div class="abs" style="left:70.6px;top:184.2px;width:32.6px;height:3px;background:#555"></div>
<div class="abs" style="left:106.4px;top:184.2px;width:32.6px;height:3px;background:#555"></div>
<div class="abs" style="left:142.1px;top:184.2px;width:32.6px;height:3px;background:#555"></div>
<div class="abs" style="left:177.9px;top:184.2px;width:32.6px;height:3px;background:#555"></div>
<div class="abs" style="left:213.6px;top:184.2px;width:5.5px;height:3px;background:#555"></div>

 <div class="abs" style="left:221.500px;top:27px;width:4px;height:164px;background:#e3e4e6;border-left:0.500px solid #bbb"></div>
 <div class="abs" style="left:32px;top:191px;width:194px;height:5px;background:#dcdde0;border-top:0.500px solid #aaa"></div>
 <div class="abs" style="left:192px;top:192px;width:26px;height:3.500px;background:#f4f4f4"></div>
 <!-- effects -->
 <div class="abs" style="left:1px;top:196px;width:225px;height:8px;background:linear-gradient(#eeeff0,#cfd1d5)"></div>
 <div class="abs" style="left:4px;top:198.500px;width:18px;height:3px;background:#8c8f95"></div>
 <div class="abs" style="left:1px;top:204px;width:225px;height:24.500px;background:#f6f6f6"></div>
 <svg class="abs" style="left:6.0px;top:207.3px;width:26px;height:18px" viewBox="0 0 94 63" preserveAspectRatio="none"><use href="#effs"/><rect x="18" y="47" width="40" height="11" fill="#1c86bf"/></svg>
<svg class="abs" style="left:33.4px;top:207.3px;width:26px;height:18px" viewBox="0 0 94 63" preserveAspectRatio="none"><use href="#effs"/><rect x="18" y="47" width="40" height="11" fill="#1c86bf"/></svg>
<svg class="abs" style="left:60.8px;top:207.3px;width:26px;height:18px" viewBox="0 0 94 63" preserveAspectRatio="none"><use href="#effs"/><rect x="18" y="47" width="40" height="11" fill="#1c86bf"/></svg>
<svg class="abs" style="left:88.2px;top:207.3px;width:26px;height:18px" viewBox="0 0 94 63" preserveAspectRatio="none"><use href="#effs"/><rect x="18" y="47" width="40" height="11" fill="#1c86bf"/></svg>
<svg class="abs" style="left:115.6px;top:207.3px;width:26px;height:18px" viewBox="0 0 94 63" preserveAspectRatio="none"><use href="#effs"/><rect x="18" y="47" width="40" height="11" fill="#1c86bf"/></svg>
<svg class="abs" style="left:143.0px;top:207.3px;width:26px;height:18px" viewBox="0 0 94 63" preserveAspectRatio="none"><use href="#effs"/><rect x="18" y="47" width="40" height="11" fill="#1c86bf"/></svg>
<svg class="abs" style="left:170.4px;top:207.3px;width:26px;height:18px" viewBox="0 0 94 63" preserveAspectRatio="none"><use href="#effs"/><rect x="18" y="47" width="40" height="11" fill="#1c86bf"/></svg>
<svg class="abs" style="left:197.8px;top:207.3px;width:26px;height:18px" viewBox="0 0 94 63" preserveAspectRatio="none"><use href="#effs"/><rect x="18" y="47" width="40" height="11" fill="#1c86bf"/></svg>

 <!-- right mini panel -->
 <div class="abs" style="left:226px;top:19px;width:2px;height:211px;background:#c6c8cc"></div>
 <div class="abs" style="left:228px;top:27px;width:300px;height:174px;background:#f0f0f0"></div>
 <div class="abs" id="vid" style="left:231px;top:29.300px;width:292px;height:171px;overflow:hidden;background:radial-gradient(ellipse 7px 5px at 131px 116px,rgba(190,20,70,.8),transparent),radial-gradient(ellipse 7px 5px at 161px 116px,rgba(190,20,60,.8),transparent),radial-gradient(ellipse 9px 6px at 84px 95px,rgba(80,40,200,.55),transparent),radial-gradient(ellipse 8px 6px at 225px 112px,rgba(110,40,200,.6),transparent),radial-gradient(ellipse 6px 4px at 73px 126px,rgba(40,40,190,.5),transparent),radial-gradient(ellipse 7px 5px at 187px 118px,rgba(60,40,180,.45),transparent),radial-gradient(ellipse 6px 4px at 210px 96px,rgba(90,30,140,.4),transparent),radial-gradient(ellipse 140px 36px at 150px 112px,rgba(20,16,62,.42),transparent),radial-gradient(ellipse 60px 34px at 144px 48px,rgba(12,30,46,.5),transparent),#04050d">
  <div class="abs" style="left:14px;top:-0.500px;font-size:29px;line-height:32px;font-weight:normal;-webkit-text-stroke:0.700px #7e1317;font-style:italic;color:#7e1317;white-space:nowrap;letter-spacing:0px;transform-origin:0 0;transform:scaleX(1.02)">确定剪辑开始点</div>
  <div class="abs" style="left:11px;top:29px;width:213px;height:1.500px;background:#7e1317"></div>
  <div class="abs" style="left:22px;top:15px;width:18px;height:14px;border-radius:50%;background:radial-gradient(circle at 35% 40%,#ffe36a 0,#f7a81c 45%,#d4470f 100%)"></div>
  <div class="abs" style="left:29px;top:19px;width:7px;height:4px;border-radius:50%;background:#5a1208;transform:rotate(-25deg)"></div>
  <div class="abs" style="left:97.500px;top:40px;width:9.500px;height:9.500px;background:#43b35a;box-shadow:81.500px 0 0 #43b35a"></div>
  <div class="abs" style="left:100px;top:42px;width:4px;height:5px;background:#bfe8c6;box-shadow:81.500px 0 0 #bfe8c6"></div>
  <div class="abs" style="left:249px;top:123px;width:20px;height:22px;opacity:.8;border-radius:40% 40% 30% 30%;background:radial-gradient(circle at 50% 40%,#c9b08a 0,#7a5a30 50%,#2a1a0c 100%)"></div>
  <div class="abs" style="left:240px;top:148px;width:37px;height:3px;background:#9a9a9a;opacity:.55"></div>
  <div class="abs" style="right:3px;top:160.500px;font-size:7.400px;line-height:10px;font-weight:bold;color:#dcdcdc;white-space:nowrap;letter-spacing:-0.200px">湖南卫视YouTube官方频道</div>
 </div>
 <!-- mini controls -->
 <div class="abs" style="left:228px;top:201px;width:300px;height:29px;background:linear-gradient(#e6e7ea,#cbced3)"></div>
 <div class="abs" style="left:232px;top:209.500px;width:290px;height:1.200px;background:#1b66a8"></div>
 <div class="abs" style="left:360.500px;top:207.500px;width:5px;height:5px;border-radius:50%;background:#e8e8e8;border:1px solid #7b8aa0"></div>
 <div class="abs" style="left:232px;top:218px;width:8px;height:5px;background:#666"></div>
 <div class="abs" style="left:247px;top:220px;width:18px;height:1.500px;background:#2a6aa6"></div>
 <div class="abs" style="left:272px;top:216.500px;width:20px;height:7px;background:#fafafa;border:0.500px solid #999"></div>
 <div class="abs" style="left:342px;top:217.300px;width:72px;height:9.600px;border-radius:5px;background:#0d5a9d"></div>
 <div class="abs" style="left:371.500px;top:215.300px;width:13.500px;height:13.500px;border-radius:50%;background:#0c4f8f;border:1px solid #cfd3d9"></div>
 <div class="abs" style="left:376.500px;top:219px;width:0;height:0;border-left:5px solid #bfe0ff;border-top:3px solid transparent;border-bottom:3px solid transparent"></div>
 <div class="abs" style="left:347px;top:220.500px;width:12px;height:3px;background:#5d9bd0;box-shadow:17px 0 0 #9cc8ee,46px 0 0 #9cc8ee,58px 0 0 #5d9bd0"></div>
 <div class="abs" style="left:420px;top:218px;width:9px;height:3.500px;border-radius:2px;background:#4a4d55"></div>
 <div class="abs" style="left:418px;top:217.500px;width:5px;height:5px;border-radius:50%;background:#f2f2f2;border:0.500px solid #999"></div>
 <div class="abs" style="left:419px;top:223.500px;width:11px;height:2.500px;background:#8a8d93"></div>
 <div class="abs" style="left:434px;top:217px;font-size:8px;line-height:9px;font-weight:bold;color:#2a6db0">X</div>
 <div class="abs" style="left:498px;top:217.300px;width:28px;height:8.500px;background:linear-gradient(#ef8a22,#d6650b);border-radius:1px"></div>
 <div class="abs" style="left:502px;top:220px;width:9px;height:3px;background:#f7c79a;box-shadow:12px 0 0 #f7c79a"></div>
 <div class="abs" style="left:505px;top:213px;width:19px;height:2.500px;background:#777"></div>
 <!-- mini timeline -->
 <div class="abs" style="left:1px;top:228.500px;width:527.500px;height:8.500px;background:linear-gradient(#eeeff0,#cfd1d5)"></div>
 <div class="abs" style="left:4px;top:231px;width:16px;height:3px;background:#8c8f95"></div>
 <div class="abs" style="left:25px;top:230px;width:5px;height:5px;border:0.500px solid #777;background:#f0f0f0;box-shadow:32px 0 0 -0.500px #bbb"></div>
 <div class="abs" style="left:33px;top:232px;width:20px;height:1.500px;background:#55607a"></div>
 <div class="abs" style="left:32px;top:230.500px;width:4px;height:4px;border-radius:50%;background:#1b66a8"></div>
 <div class="abs" style="left:1px;top:237px;width:527.500px;height:8px;background:#c9cbd0"></div>
 <div class="abs" style="left:1px;top:245px;width:18.600px;height:50.500px;background:#c9cbd0"></div>
 <div class="abs" style="left:19.600px;top:245px;width:508.500px;height:47.300px;background:#ebebeb"></div>
 <div class="abs" style="left:22px;top:238.800px;width:506px;height:3px;background:repeating-linear-gradient(90deg,#8f9299 0,#8f9299 10.500px,transparent 10.500px,transparent 13.850px)"></div>
 <div class="abs" style="left:22px;top:243px;width:506px;height:2px;background:repeating-linear-gradient(90deg,#9a9da3 0,#9a9da3 0.600px,transparent 0.600px,transparent 1.385px)"></div>
 <div class="abs" style="left:19.600px;top:252.7px;width:508px;height:1px;background:#c6c6c6"></div>
<div class="abs" style="left:19.600px;top:260.4px;width:508px;height:1px;background:#c6c6c6"></div>
<div class="abs" style="left:19.600px;top:268.1px;width:508px;height:1px;background:#c6c6c6"></div>
<div class="abs" style="left:19.600px;top:275.8px;width:508px;height:1px;background:#c6c6c6"></div>
<div class="abs" style="left:19.600px;top:283.5px;width:508px;height:1px;background:#c6c6c6"></div>
<div class="abs" style="left:19.600px;top:291.2px;width:508px;height:1px;background:#c6c6c6"></div>

 <div class="abs" style="left:7.500px;top:238px;width:6.500px;height:6.500px;border-radius:50%;border:1px solid #444"></div>
 <div class="abs" style="left:5px;top:247.0px;width:8px;height:5.500px;border:1px solid #555960"></div><div class="abs" style="left:5px;top:254.7px;width:8px;height:5.500px;border:1px solid #555960"></div><div class="abs" style="left:5px;top:262.4px;width:8px;height:5.500px;border:1px solid #555960"></div><div class="abs" style="left:5px;top:270.1px;width:8px;height:5.500px;border:1px solid #555960"></div><div class="abs" style="left:5px;top:277.8px;width:8px;height:5.500px;border:1px solid #555960"></div><div class="abs" style="left:5px;top:285.5px;width:8px;height:5.500px;border:1px solid #555960"></div>
 <div class="abs" style="left:15px;top:248.500px;width:2.500px;height:2.500px;background:#555;box-shadow:0 7.700px 0 #33f,0 15.400px 0 #555,0 23.100px 0 #555,0 30.800px 0 #555,0 38.500px 0 #555"></div>
 <div class="abs" style="left:19.600px;top:241px;width:2.500px;height:3px;background:#f0428a"></div>
 <div class="abs" style="left:19.600px;top:292.300px;width:508.500px;height:3.200px;background:#f6f6f6;border-top:0.500px solid #aaa"></div>
 <div class="abs" style="left:0;top:0;width:530px;height:298px;border:1.500px solid #17181a;border-bottom:3px solid #1a2224;border-top:none"></div>
</div>

<div class="abs" style="left:538px;top:409px;width:549px;height:89px;background:linear-gradient(#eceef0 0,#dfe1e4 40%,#cdd0d5 100%);border-bottom:1px solid #a9acb1;border-top:1px solid #a9acb1"></div>
<!-- markers -->
<svg class="abs" style="left:548px;top:411px" width="12" height="16" viewBox="0 0 13 16" preserveAspectRatio="none"><path d="M1.500 0.500 H11.500 Q12.500 0.500 12.500 1.500 V9 L6.500 15.300 L0.500 9 V1.500 Q0.500 0.500 1.500 0.500 Z" fill="#d3d6dc" stroke="#7f8796" stroke-width="1"/></svg>
<svg class="abs" style="left:1064px;top:411px" width="12" height="16" viewBox="0 0 13 16" preserveAspectRatio="none"><path d="M1.500 0.500 H11.500 Q12.500 0.500 12.500 1.500 V9 L6.500 15.300 L0.500 9 V1.500 Q0.500 0.500 1.500 0.500 Z" fill="#d3d6dc" stroke="#7f8796" stroke-width="1"/></svg>
<div class="abs" style="left:554px;top:434px;width:516px;height:2px;background:#0d5aa0"></div>
<div class="abs" style="left:623px;top:427px;width:16px;height:16px;border-radius:50%;background:radial-gradient(circle at 50% 35%,#fff,#dfe2e6);border:1px solid #9aa0ab;box-shadow:0 1px 1px rgba(0,0,0,.25)"></div>
<div class="abs" style="left:628px;top:432px;width:6px;height:6px;border-radius:50%;background:#0d5aa0"></div>
<div class="abs digi" style="left:547px;top:444.500px">00:00:27.30</div>
<div class="abs digi" style="left:1016px;top:444.500px">00:03:02.67</div>
<!-- volume -->
<svg class="abs" style="left:549px;top:465px" width="20" height="18" viewBox="0 0 20 18"><path d="M0.500 6 H4 L9 1.500 V16.500 L4 12 H0.500 Z" fill="#5a5f6b"/><path d="M11.500 5.500 Q13.500 9 11.500 12.500 M14 3 Q18 9 14 15" stroke="#5a5f6b" stroke-width="1.600" fill="none" stroke-linecap="round"/></svg>
<div class="abs" style="left:585px;top:473px;width:32px;height:2px;background:#0d5aa0"></div>
<div class="abs" style="left:617px;top:473px;width:33px;height:2px;background:#5a6072"></div>
<div class="abs" style="left:609px;top:466px;width:16px;height:16px;border-radius:50%;background:radial-gradient(circle at 50% 35%,#fff,#dfe2e6);border:1px solid #9aa0ab;box-shadow:0 1px 1px rgba(0,0,0,.25)"></div>
<div class="abs" style="left:614px;top:471px;width:6px;height:6px;border-radius:50%;background:#0d5aa0"></div>
<!-- pill -->
<div class="abs" style="left:682px;top:459px;width:260px;height:29px;border-radius:15px;background:linear-gradient(#0f64ad 0,#0b5599 50%,#0a4a88 100%);border:1px solid #0a3f74"></div>
<div class="abs" style="left:740px;top:460px;width:1px;height:27px;background:#2a86d2"></div>
<div class="abs" style="left:882px;top:460px;width:1px;height:27px;background:#2a86d2"></div>
<!-- combo -->
<div class="abs" style="left:673px;top:461px;width:62px;height:20px;background:#fff;border:1px solid #8e949e"></div>
<div class="abs" style="left:714px;top:462px;width:20px;height:18px;background:linear-gradient(#fdfdfd,#e1e3e7);border-left:1px solid #a9acb1"></div>
<svg class="abs" style="left:720px;top:468px" width="9" height="7" viewBox="0 0 9 7"><path d="M0.500 0.500 H8.500 L4.500 6.500 Z" fill="#8a8d94"/></svg>
<div class="abs" style="left:674px;top:464px;width:7px;height:14px;background:#2f6fd1;color:#fff;font-size:12px;line-height:14px;text-align:center;font-family:'Liberation Serif',serif">1</div>
<!-- prev/next -->
<svg class="abs" style="left:753px;top:468px" width="18" height="12" viewBox="0 0 18 12"><rect x="0.500" y="0.500" width="2.400" height="11" fill="#8fc8f8"/><path d="M3 6 L10 0.500 V11.500 Z M10 6 L17 0.500 V11.500 Z" fill="#8fc8f8"/></svg>
<svg class="abs" style="left:852px;top:468px" width="18" height="12" viewBox="0 0 18 12"><rect x="15.100" y="0.500" width="2.400" height="11" fill="#8fc8f8"/><path d="M15 6 L8 0.500 V11.500 Z M8 6 L1 0.500 V11.500 Z" fill="#8fc8f8"/></svg>
<div class="abs" style="left:893px;top:466px;font-size:12px;line-height:14px;color:#9fd2fb;white-space:nowrap">结束点</div>
<!-- pause -->
<div class="abs" style="left:786.500px;top:448.300px;width:50px;height:50px;border-radius:50%;background:linear-gradient(#dcdee1,#cfd2d7)"></div>
<div class="abs" style="left:791px;top:452.800px;width:41px;height:41px;border-radius:50%;background:linear-gradient(#0f64ad,#0a4582);border:1px solid #0a3f74"></div>
<div class="abs" style="left:805px;top:466px;width:4px;height:17px;background:#7cc4fa"></div>
<div class="abs" style="left:815px;top:466px;width:4px;height:17px;background:#7cc4fa"></div>
<!-- orange button -->
<div class="abs" style="left:977px;top:459px;width:100px;height:28px;border-radius:3px;background:linear-gradient(#f0811a 0,#e06c0c 50%,#cf5d06 100%);border:1px solid #b85205"></div>
<div class="abs" style="left:1026px;top:460px;width:1px;height:26px;background:#f5a555"></div>
<div class="abs" style="left:988px;top:466px;font-size:12px;line-height:14px;color:#fff;white-space:nowrap;letter-spacing:6px">截取</div>
<div class="abs" style="left:1037px;top:466px;font-size:12px;line-height:14px;color:#fff;white-space:nowrap;letter-spacing:6px">剪切</div>
<!-- toggle -->
<div class="abs" style="left:963px;top:461px;width:32px;height:13px;border-radius:7px;background:linear-gradient(#6a6f7a,#40444d)"></div>
<div class="abs" style="left:955px;top:459px;width:16px;height:16px;border-radius:50%;background:radial-gradient(circle at 50% 35%,#fff,#e6e8eb);border:1px solid #a0a5ae"></div>
<div class="abs" style="left:959px;top:477px;font-size:11px;line-height:12px;color:#6d7077;white-space:nowrap;font-weight:bold">去水印</div>
<svg class="abs" style="left:1016px;top:462px" width="14" height="20" viewBox="0 0 14 20"><path d="M11.500 0.500 L3 15 M2.500 0.500 L11 15" stroke="#1e78c8" stroke-width="1.600" fill="none"/><circle cx="3" cy="16.500" r="2.200" fill="none" stroke="#1e78c8" stroke-width="1.400"/><circle cx="11" cy="16.500" r="2.200" fill="none" stroke="#1e78c8" stroke-width="1.400"/></svg>



<div class="abs" style="left:5px;top:386px;width:528px;height:4px;background:#d4d6da;border-top:1px solid #a9acb1"></div>
<div class="abs hdr" style="left:5px;top:389px;width:528px;height:24px;border-left:none"></div>
<div class="abs hdrtxt" style="left:11px;top:395px">效果收集栏</div>
<div class="abs" style="left:5px;top:413px;width:528px;height:85px;background:#fafafa;border-bottom:1px solid #b5b7bb;border-right:1px solid #b5b7bb"></div>
<svg class="abs" style="left:8px;top:447px" width="11" height="17" viewBox="0 0 11 17"><path d="M6.500 0.500 H10 L4.500 8.500 L10 16.500 H6.500 L0.500 8.500 Z" fill="#7b8597"/></svg>
<svg class="abs" style="left:519px;top:447px" width="11" height="17" viewBox="0 0 11 17"><path d="M4.500 0.500 H1 L6.500 8.500 L1 16.500 H4.500 L10.500 8.500 Z" fill="#7b8597"/></svg>
<svg class="eff" style="left:22px" viewBox="0 0 94 63"><use href="#effs"/></svg><div class="abs" style="left:41px;top:470px;font-size:12px;line-height:14px;font-weight:bold;color:#1fa6e3;white-space:nowrap;letter-spacing:-0.300px">编辑星</div>
<svg class="eff" style="left:122px" viewBox="0 0 94 63"><use href="#effs"/></svg><div class="abs" style="left:141px;top:470px;font-size:12px;line-height:14px;font-weight:bold;color:#1fa6e3;white-space:nowrap;letter-spacing:-0.300px">编辑星</div>
<svg class="eff" style="left:222px" viewBox="0 0 94 63"><use href="#effs"/></svg><div class="abs" style="left:241px;top:470px;font-size:12px;line-height:14px;font-weight:bold;color:#1fa6e3;white-space:nowrap;letter-spacing:-0.300px">编辑星</div>
<svg class="eff" style="left:322px" viewBox="0 0 94 63"><use href="#effs"/></svg><div class="abs" style="left:341px;top:470px;font-size:12px;line-height:14px;font-weight:bold;color:#1fa6e3;white-space:nowrap;letter-spacing:-0.300px">编辑星</div>
<svg class="eff" style="left:422px" viewBox="0 0 94 63"><use href="#effs"/></svg><div class="abs" style="left:441px;top:470px;font-size:12px;line-height:14px;font-weight:bold;color:#1fa6e3;white-space:nowrap;letter-spacing:-0.300px">编辑星</div>

<!-- splitter row -->
<div class="abs" style="left:5px;top:498px;width:1082px;height:5px;background:#d6d8dc"></div>


<div class="abs hdr" style="left:5px;top:502px;width:1082px;height:25px;border-left:none;border-right:none"></div>
<div class="abs hdrtxt" style="left:11px;top:508px">轨道栏</div>
<div class="abs" style="left:91px;top:507px;width:16px;height:16px;border:1px solid #7b8597;border-radius:2px;background:linear-gradient(#fff,#e4e6ea)"></div>
<div class="abs" style="left:95px;top:514px;width:8px;height:3px;background:#444a57"></div>
<div class="abs" style="left:214px;top:507px;width:16px;height:16px;border:1px solid #7b8597;border-radius:2px;background:linear-gradient(#fff,#e4e6ea)"></div>
<div class="abs" style="left:218px;top:514px;width:8px;height:3px;background:#444a57"></div>
<div class="abs" style="left:220.500px;top:511px;width:3px;height:9px;background:#444a57"></div>
<div class="abs" style="left:130px;top:514px;width:67px;height:2px;background:#565d70"></div>
<div class="abs" style="left:116px;top:507px;width:16px;height:16px;border-radius:50%;background:radial-gradient(circle at 50% 35%,#fff,#dfe2e6);border:1px solid #9aa0ab;box-shadow:0 1px 1px rgba(0,0,0,.25)"></div>
<div class="abs" style="left:121px;top:512px;width:6px;height:6px;border-radius:50%;background:#0d5aa0"></div>
<!-- ruler + left column -->
<div class="abs" style="left:5px;top:527px;width:1082px;height:30px;background:#c9cbd0;border-bottom:1px solid #9fa2a8"></div>
<div class="abs" style="left:5px;top:557px;width:67px;height:173.500px;background:#c9cbd0"></div>
<div class="abs" style="left:72px;top:557px;width:1015px;height:157px;background:#ebebeb"></div>
<div class="abs" id="ruler" style="left:72px;top:527px;width:1015px;height:29px;overflow:hidden">
 <div class="abs" style="left:0;top:21px;width:1015px;height:5px;background:repeating-linear-gradient(90deg,#3c3f46 0,#3c3f46 1px,transparent 1px,transparent 5px)"></div>
 <div class="abs" style="left:0;top:18px;width:1015px;height:4px;background:repeating-linear-gradient(90deg,#3c3f46 0,#3c3f46 1px,transparent 1px,transparent 10px)"></div>
 <div class="abs" style="left:0;top:15px;width:1015px;height:4px;background:repeating-linear-gradient(90deg,#3c3f46 0,#3c3f46 1px,transparent 1px,transparent 50px)"></div>
 <div class="abs" style="left:-24.5px;top:4px;width:50px;text-align:center;font-size:9.300px;line-height:11px;color:#0f1012;white-space:nowrap">00:00:00</div><div class="abs" style="left:25.5px;top:4px;width:50px;text-align:center;font-size:9.300px;line-height:11px;color:#0f1012;white-space:nowrap">00:00:10</div><div class="abs" style="left:75.5px;top:4px;width:50px;text-align:center;font-size:9.300px;line-height:11px;color:#0f1012;white-space:nowrap">00:00:20</div><div class="abs" style="left:125.5px;top:4px;width:50px;text-align:center;font-size:9.300px;line-height:11px;color:#0f1012;white-space:nowrap">00:00:30</div><div class="abs" style="left:175.5px;top:4px;width:50px;text-align:center;font-size:9.300px;line-height:11px;color:#0f1012;white-space:nowrap">00:00:40</div><div class="abs" style="left:225.5px;top:4px;width:50px;text-align:center;font-size:9.300px;line-height:11px;color:#0f1012;white-space:nowrap">00:00:50</div><div class="abs" style="left:275.5px;top:4px;width:50px;text-align:center;font-size:9.300px;line-height:11px;color:#0f1012;white-space:nowrap">00:01:00</div><div class="abs" style="left:325.5px;top:4px;width:50px;text-align:center;font-size:9.300px;line-height:11px;color:#0f1012;white-space:nowrap">00:01:10</div><div class="abs" style="left:375.5px;top:4px;width:50px;text-align:center;font-size:9.300px;line-height:11px;color:#0f1012;white-space:nowrap">00:01:20</div><div class="abs" style="left:425.5px;top:4px;width:50px;text-align:center;font-size:9.300px;line-height:11px;color:#0f1012;white-space:nowrap">00:01:30</div><div class="abs" style="left:475.5px;top:4px;width:50px;text-align:center;font-size:9.300px;line-height:11px;color:#0f1012;white-space:nowrap">00:01:40</div><div class="abs" style="left:525.5px;top:4px;width:50px;text-align:center;font-size:9.300px;line-height:11px;color:#0f1012;white-space:nowrap">00:01:50</div><div class="abs" style="left:575.5px;top:4px;width:50px;text-align:center;font-size:9.300px;line-height:11px;color:#0f1012;white-space:nowrap">00:02:00</div><div class="abs" style="left:625.5px;top:4px;width:50px;text-align:center;font-size:9.300px;line-height:11px;color:#0f1012;white-space:nowrap">00:02:10</div><div class="abs" style="left:675.5px;top:4px;width:50px;text-align:center;font-size:9.300px;line-height:11px;color:#0f1012;white-space:nowrap">00:02:20</div><div class="abs" style="left:725.5px;top:4px;width:50px;text-align:center;font-size:9.300px;line-height:11px;color:#0f1012;white-space:nowrap">00:02:30</div><div class="abs" style="left:775.5px;top:4px;width:50px;text-align:center;font-size:9.300px;line-height:11px;color:#0f1012;white-space:nowrap">00:02:40</div><div class="abs" style="left:825.5px;top:4px;width:50px;text-align:center;font-size:9.300px;line-height:11px;color:#0f1012;white-space:nowrap">00:02:50</div><div class="abs" style="left:875.5px;top:4px;width:50px;text-align:center;font-size:9.300px;line-height:11px;color:#0f1012;white-space:nowrap">00:03:00</div><div class="abs" style="left:925.5px;top:4px;width:50px;text-align:center;font-size:9.300px;line-height:11px;color:#0f1012;white-space:nowrap">00:03:10</div><div class="abs" style="left:975.5px;top:4px;width:50px;text-align:center;font-size:9.300px;line-height:11px;color:#0f1012;white-space:nowrap">00:03:20</div>
</div>
<div class="abs trk" style="top:582px"></div><div class="abs trkL" style="top:582px"></div>
<div class="abs trk" style="top:608px"></div><div class="abs trkL" style="top:608px"></div>
<div class="abs trk" style="top:634px"></div><div class="abs trkL" style="top:634px"></div>
<div class="abs trk" style="top:660px"></div><div class="abs trkL" style="top:660px"></div>
<div class="abs trk" style="top:686px"></div><div class="abs trkL" style="top:686px"></div>

<!-- track icons -->

<svg class="abs" style="left:28px;top:530px" width="24" height="24" viewBox="0 0 24 24"><circle cx="11.500" cy="12" r="9.600" fill="none" stroke="#3a3e46" stroke-width="2.200"/><path d="M11.500 6 V13 L8.500 15.500" stroke="#3a3e46" stroke-width="2" fill="none"/></svg>
<svg class="abs" style="left:14px;top:559px" width="25" height="20" viewBox="0 0 25 20"><rect x="1" y="1" width="23" height="18" rx="1.500" fill="none" stroke="#383b43" stroke-width="1.800"/><path d="M2.500 3.200 H22.500 M2.500 16.800 H22.500" stroke="#383b43" stroke-width="2" stroke-dasharray="1.700 1.200"/><path d="M13.500 4.500 V15.500" stroke="#383b43" stroke-width="1.200"/></svg>
<svg class="abs" style="left:51px;top:563px" width="9" height="11" viewBox="0 0 9 11"><path d="M0.500 0.500 L8.500 5.500 L0.500 10.500 Z" fill="#3c3f47"/></svg>
<svg class="abs" style="left:14px;top:585px" width="25" height="21" viewBox="0 0 25 21"><rect x="1.200" y="1.200" width="22.600" height="18.600" rx="1.500" fill="none" stroke="#383b43" stroke-width="2.400"/><path d="M5 8 H7.500 L10.500 5 V16 L7.500 13 H5 Z" fill="#383b43"/><path d="M13.500 7.500 L19 13.500 M19 7.500 L13.500 13.500" stroke="#383b43" stroke-width="1.300"/></svg>
<div class="abs" style="left:50px;top:594px;width:10px;height:2px;background:#1515f0"></div>
<div class="abs" style="left:54px;top:590px;width:2px;height:10px;background:#1515f0"></div>
<svg class="abs" style="left:14px;top:611px" width="25" height="21" viewBox="0 0 25 21"><rect x="1" y="1" width="23" height="19" rx="1.500" fill="none" stroke="#383b43" stroke-width="1.800"/><path d="M2.500 3.200 H22.500 M2.500 17.800 H22.500" stroke="#383b43" stroke-width="2" stroke-dasharray="1.700 1.200"/><rect x="3.500" y="6" width="8" height="9" fill="none" stroke="#383b43" stroke-width="1.200"/><rect x="13.500" y="6" width="8" height="9" fill="none" stroke="#383b43" stroke-width="1.200"/><text x="4.800" y="13.500" font-size="7.500" font-weight="bold" fill="#383b43" font-family="Liberation Sans, sans-serif">A</text><text x="15" y="13.500" font-size="7.500" font-weight="bold" fill="#383b43" font-family="Liberation Sans, sans-serif">B</text></svg>
<svg class="abs" style="left:14px;top:636px" width="27" height="24" viewBox="0 0 27 24"><rect x="1" y="1" width="23" height="18" rx="1.500" fill="none" stroke="#383b43" stroke-width="1.800"/><path d="M2.500 3.200 H22.500 M2.500 16.800 H22.500" stroke="#383b43" stroke-width="2" stroke-dasharray="1.700 1.200"/><path d="M18.500 4.500 V11" stroke="#383b43" stroke-width="1.200"/><path d="M19.500 13 L23.500 20" stroke="#383b43" stroke-width="4" stroke-linecap="round"/><path d="M19.500 13 L23.500 20" stroke="#c9cbd0" stroke-width="1.200" stroke-linecap="round"/></svg>
<svg class="abs" style="left:17px;top:663px" width="21" height="21" viewBox="0 0 21 21"><rect x="1.200" y="1.200" width="18.600" height="18.600" rx="2" fill="none" stroke="#383b43" stroke-width="2.400"/><path d="M6 6 H15 V8.800 H12 V15 H9 V8.800 H6 Z" fill="#383b43"/></svg>
<svg class="abs" style="left:16px;top:689px" width="20" height="22" viewBox="0 0 20 22"><path d="M6.500 17 V3.500 L17.500 1 V14.500" stroke="#383b43" stroke-width="2" fill="none"/><path d="M6.500 3.500 L17.500 1 V5 L6.500 7.500 Z" fill="#383b43"/><ellipse cx="4" cy="17.500" rx="3.500" ry="2.800" fill="#383b43"/><ellipse cx="15" cy="15" rx="3.500" ry="2.800" fill="#383b43"/></svg>
<svg class="abs" style="left:49px;top:616px" width="13" height="12" viewBox="0 0 11 10"><rect x="3" y="4.500" width="8" height="5.500" fill="#3c3f47"/><path d="M1 5 V2.800 Q1 1 2.800 1 Q4.600 1 4.600 2.800 V4.500" fill="none" stroke="#3c3f47" stroke-width="1.200"/></svg>
<svg class="abs" style="left:49px;top:642px" width="13" height="12" viewBox="0 0 11 10"><rect x="3" y="4.500" width="8" height="5.500" fill="#3c3f47"/><path d="M1 5 V2.800 Q1 1 2.800 1 Q4.600 1 4.600 2.800 V4.500" fill="none" stroke="#3c3f47" stroke-width="1.200"/></svg>
<svg class="abs" style="left:49px;top:668px" width="13" height="12" viewBox="0 0 11 10"><rect x="3" y="4.500" width="8" height="5.500" fill="#3c3f47"/><path d="M1 5 V2.800 Q1 1 2.800 1 Q4.600 1 4.600 2.800 V4.500" fill="none" stroke="#3c3f47" stroke-width="1.200"/></svg>
<svg class="abs" style="left:49px;top:694px" width="13" height="12" viewBox="0 0 11 10"><rect x="3" y="4.500" width="8" height="5.500" fill="#3c3f47"/><path d="M1 5 V2.800 Q1 1 2.800 1 Q4.600 1 4.600 2.800 V4.500" fill="none" stroke="#3c3f47" stroke-width="1.200"/></svg>

<!-- playhead -->
<div class="abs" style="left:72px;top:548px;width:1.200px;height:166px;background:#ff4088"></div><div class="abs trkL" style="top:714px"></div>
<svg class="abs" style="left:72px;top:537px" width="12" height="19" viewBox="0 0 12 19"><path d="M0 6 L10.200 10.300 L0 19 Z" fill="#ff4088"/><path d="M4 9 L8.700 1.200" stroke="#ff4088" stroke-width="1.700" fill="none"/></svg>
<!-- bottom scrollbar -->
<div class="abs" style="left:72px;top:714px;width:1015px;height:16.500px;background:#f7f7f7;border-top:1px solid #a9acb1"></div>
<div class="abs sbbtn" style="left:72px;top:714px;width:17px;height:16.500px"></div>
<div class="abs sbbtn" style="left:1070px;top:714px;width:17px;height:16.500px;border-right:none"></div>
<div class="abs" style="left:89px;top:714px;width:538px;height:16.500px;background:linear-gradient(#f4f5f6,#e6e8ea 45%,#d9dbdf);border:1px solid #a9acb1"></div>
<svg class="abs" style="left:77px;top:718px" width="7" height="9" viewBox="0 0 7 9"><path d="M0.500 4.500 L6.500 0.500 V8.500 Z" fill="#5d6a86"/></svg>
<svg class="abs" style="left:1076px;top:718px" width="7" height="9" viewBox="0 0 7 9"><path d="M6.500 4.500 L0.500 0.500 V8.500 Z" fill="#5d6a86"/></svg>
<div class="abs" style="left:355px;top:720px;width:1px;height:6px;background:#7d8597;box-shadow:2px 0 0 #7d8597,4px 0 0 #7d8597"></div>

</div>
</body>
</html>
